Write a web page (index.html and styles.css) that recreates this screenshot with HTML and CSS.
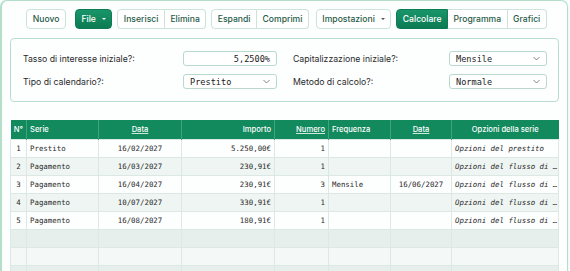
FILE: index.html
```html
<!DOCTYPE html>
<html lang="it">
<head>
    <meta charset="UTF-8">
    <title>Calcolo prestito</title>
    <link rel="stylesheet" href="styles.css">
</head>
<body>
    <div class="frame">
        <!-- Barra degli strumenti -->
        <div class="toolbar">
            <button class="btn btn-nuovo">Nuovo</button>
            <button class="btn primary">File <span class="caret"></span></button>
            <div class="group">
                <button class="btn">Inserisci</button>
                <button class="btn">Elimina</button>
            </div>
            <div class="group group-wide">
                <button class="btn">Espandi</button>
                <button class="btn">Comprimi</button>
            </div>
            <button class="btn">Impostazioni <span class="caret dark"></span></button>
            <div class="group">
                <button class="btn primary">Calcolare</button>
                <button class="btn">Programma</button>
                <button class="btn">Grafici</button>
            </div>
        </div>

        <!-- Parametri -->
        <div class="panel">
            <div class="field">
                <label>Tasso di interesse iniziale?:</label>
                <div class="control num">5,2500%</div>
            </div>
            <div class="field right">
                <label>Capitalizzazione iniziale?:</label>
                <div class="control select">Mensile
                    <svg width="7" height="5" viewBox="0 0 7 5"><path d="M0.5 1 L3.5 4 L6.5 1" fill="none" stroke="#777" stroke-width="0.9"/></svg>
                </div>
            </div>
            <div class="field">
                <label>Tipo di calendario?:</label>
                <div class="control select">Prestito
                    <svg width="7" height="5" viewBox="0 0 7 5"><path d="M0.5 1 L3.5 4 L6.5 1" fill="none" stroke="#777" stroke-width="0.9"/></svg>
                </div>
            </div>
            <div class="field right">
                <label>Metodo di calcolo?:</label>
                <div class="control select">Normale
                    <svg width="7" height="5" viewBox="0 0 7 5"><path d="M0.5 1 L3.5 4 L6.5 1" fill="none" stroke="#777" stroke-width="0.9"/></svg>
                </div>
            </div>
        </div>

        <!-- Tabella delle serie -->
        <table class="grid">
            <colgroup>
                <col style="width:16px">
                <col style="width:72px">
                <col style="width:83px">
                <col style="width:93px">
                <col style="width:54px">
                <col style="width:62px">
                <col style="width:61px">
                <col>
            </colgroup>
            <thead>
                <tr>
                    <th class="c-no">N°</th>
                    <th class="left">Serie</th>
                    <th><u>Data</u></th>
                    <th class="right">Importo</th>
                    <th class="right"><u>Numero</u></th>
                    <th class="left">Frequenza</th>
                    <th><u>Data</u></th>
                    <th>Opzioni della serie</th>
                </tr>
            </thead>
            <tbody>
                <tr>
                    <td class="c-no">1</td><td>Prestito</td><td class="center">16/02/2027</td><td class="right">5.250,00€</td><td class="right">1</td><td></td><td></td><td class="opt">Opzioni del prestito</td>
                </tr>
                <tr>
                    <td class="c-no">2</td><td>Pagamento</td><td class="center">16/03/2027</td><td class="right">230,91€</td><td class="right">1</td><td></td><td></td><td class="opt">Opzioni del flusso di …</td>
                </tr>
                <tr>
                    <td class="c-no">3</td><td>Pagamento</td><td class="center">16/04/2027</td><td class="right">230,91€</td><td class="right">3</td><td>Mensile</td><td class="center">16/06/2027</td><td class="opt">Opzioni del flusso di …</td>
                </tr>
                <tr>
                    <td class="c-no">4</td><td>Pagamento</td><td class="center">10/07/2027</td><td class="right">330,91€</td><td class="right">1</td><td></td><td></td><td class="opt">Opzioni del flusso di …</td>
                </tr>
                <tr>
                    <td class="c-no">5</td><td>Pagamento</td><td class="center">16/08/2027</td><td class="right">180,91€</td><td class="right">1</td><td></td><td></td><td class="opt">Opzioni del flusso di …</td>
                </tr>
                <tr><td></td><td></td><td></td><td></td><td></td><td></td><td></td><td></td></tr>
                <tr><td></td><td></td><td></td><td></td><td></td><td></td><td></td><td></td></tr>
                <tr><td></td><td></td><td></td><td></td><td></td><td></td><td></td><td></td></tr>
            </tbody>
        </table>
    </div>
</body>
</html>
```
FILE: styles.css
```css
body {
    margin: 0;
    font-family: Inter, "Noto Sans", sans-serif;
    background-color: #ffffff;
    color: #2a2a2a;
}

.frame {
    width: 549px;
    padding: 8px 8px 20px 8px;
    border: 1px solid #b3dfcb;
    border-left-width: 2px;
    border-radius: 7px;
    box-shadow: 0 0 2px rgba(60, 160, 120, 0.25);
    background-color: #fdfefe;
}

/* Barra degli strumenti */
.toolbar {
    display: flex;
    justify-content: center;
    gap: 5px;
    padding-left: 4px;
}

.group {
    display: flex;
}

.group .btn {
    border-radius: 0;
}

.group .btn + .btn {
    border-left: none;
}

.group .btn:first-child {
    border-radius: 4px 0 0 4px;
}

.group .btn:last-child {
    border-radius: 0 4px 4px 0;
}

.group-wide {
    margin-right: 2px;
}

.btn-nuovo {
    margin-right: 4px;
}

.btn {
    height: 20px;
    padding: 0 5.5px;
    border: 1px solid #cbe3d9;
    border-radius: 4px;
    background-color: #ffffff;
    color: #1f5b47;
    font-family: Inter, sans-serif;
    font-size: 8.6px;
    font-weight: 500;
    display: flex;
    align-items: center;
    gap: 6px;
}

.btn.primary {
    background: linear-gradient(#19956a, #0c7a52);
    border-color: #0d7c54;
    color: #ffffff;
}

.caret {
    width: 0;
    height: 0;
    border-left: 2px solid transparent;
    border-right: 2px solid transparent;
    border-top: 2px solid #ffffff;
}

.caret.dark {
    border-top-color: #555;
}

/* Pannello dei parametri */
.panel {
    margin-top: 9px;
    border: 1px solid #b9ded0;
    border-radius: 4px;
    padding: 12px 11px 12px 12px;
    display: grid;
    grid-template-columns: 254px 254px;
    column-gap: 16px;
    row-gap: 8px;
}

.field {
    display: flex;
    align-items: center;
    justify-content: space-between;
    font-size: 8.7px;
    color: #2a2a2a;
}

.control {
    width: 94px;
    height: 15px;
    box-sizing: border-box;
    border: 1px solid #b9d9cd;
    border-radius: 3px;
    background-color: #ffffff;
    font-family: "DejaVu Sans Mono", monospace;
    font-size: 8.6px;
    color: #222;
    display: flex;
    align-items: center;
    padding: 0 6px;
}

.field.right .control {
    width: 98px;
}

.control.num {
    justify-content: flex-end;
}

.control.select {
    justify-content: space-between;
}

/* Tabella */
.grid {
    margin-top: 18px;
    width: 549px;
    border-collapse: collapse;
    table-layout: fixed;
    font-family: "DejaVu Sans Mono", monospace;
    font-size: 7.4px;
    color: #2a2a2a;
}

.grid th {
    height: 19px;
    background-color: #13895e;
    color: #ffffff;
    font-family: Inter, sans-serif;
    font-size: 7.6px;
    font-weight: 500;
    text-align: center;
    padding: 0 3px;
    border-left: 1px solid #3ea47d;
    white-space: nowrap;
}

.grid th:first-child {
    border-left: none;
}

.grid th u {
    text-decoration-color: #cfe9de;
}

.grid td {
    height: 17px;
    padding: 0 3px;
    border: 1px solid #dce8e3;
    white-space: nowrap;
    overflow: hidden;
}

.grid tbody tr:nth-child(even) td {
    background-color: #eef5f2;
}

.grid tbody tr:nth-child(n+6):nth-child(even) td {
    background-color: #e6efec;
}

.grid tbody tr:nth-child(n+6):nth-child(odd) td {
    background-color: #f4f8f6;
}

.grid .left {
    text-align: left;
}

.grid .right {
    text-align: right;
}

.grid .center {
    text-align: center;
}

.grid .c-no {
    text-align: center;
    padding: 0;
}

.grid .opt {
    font-style: italic;
}
```
